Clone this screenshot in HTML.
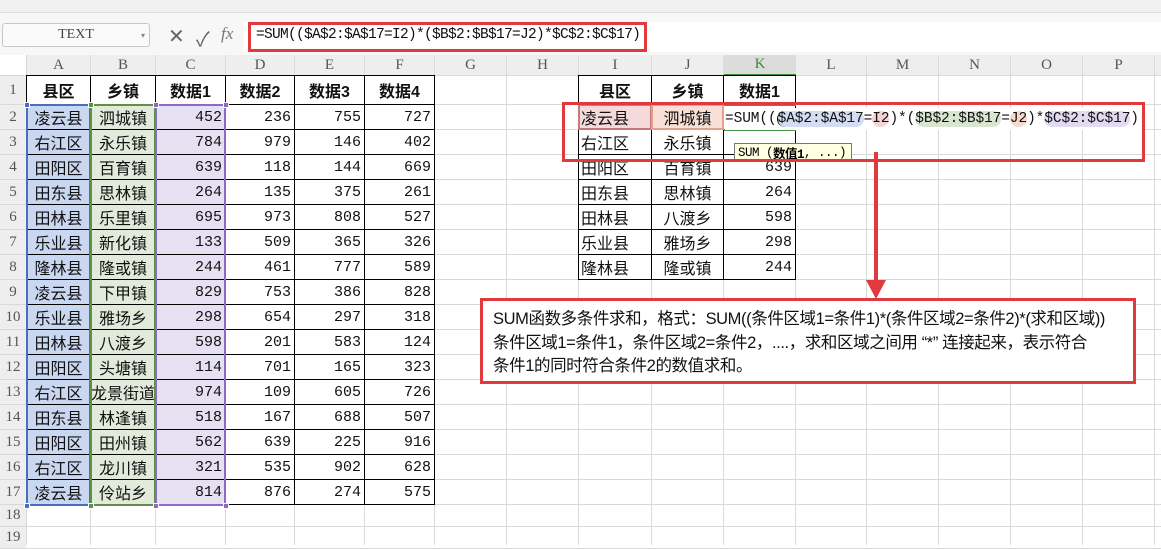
<!DOCTYPE html>
<html><head><meta charset="utf-8">
<style>
*{margin:0;padding:0;box-sizing:border-box}
body{width:1161px;height:545px;overflow:hidden;background:#fff;position:relative;font-family:"Liberation Sans","Noto Sans CJK SC",sans-serif}
.a{position:absolute}
.c{position:absolute;display:flex;align-items:center;white-space:nowrap;overflow:hidden;font-size:16px;color:#111}
.h{position:absolute;display:flex;align-items:center;justify-content:center;background:#eeeeee;color:#555;font-size:15px;font-family:"Liberation Serif","Noto Serif CJK SC",serif}
.num{font-family:"Liberation Mono",monospace;font-size:15px;justify-content:flex-end;padding-right:3px}
</style></head><body>
<div class="a" style="left:0;top:0;width:1161px;height:13px;background:#f1f1f1;border-bottom:1px solid #dcdcdc"></div>
<div class="a" style="left:0;top:13px;width:1161px;height:42px;background:#f7f7f7"></div>
<div class="a" style="left:2px;top:23px;width:148px;height:24px;border:1px solid #c8c8c8;border-radius:3px;background:#fafafa;font-family:'Liberation Serif',serif;font-size:14px;color:#444;display:flex;align-items:center;justify-content:center">TEXT<span style="position:absolute;right:4px;font-size:8px;color:#888">▾</span></div>
<div class="a" style="left:168px;top:24px;font-size:20px;color:#666">✕</div>
<div class="a" style="left:196px;top:23px;font-size:20px;color:#666">✓</div>
<div class="a" style="left:221px;top:24px;font-size:17px;color:#777;font-style:italic;font-family:'Liberation Serif',serif">fx</div>
<div class="a" style="left:244px;top:22px;width:917px;height:30px;background:#fff"></div>
<div class="a" style="left:248px;top:22px;width:399px;height:30px;border:3px solid #e0393e"></div>
<div class="a" style="left:256px;top:27px;font-family:'Liberation Mono',monospace;font-size:14.5px;color:#111;letter-spacing:-0.7px">=SUM(($A$2:$A$17=I2)*($B$2:$B$17=J2)*$C$2:$C$17)</div>
<div id="g"></div>
<script>
var cw=[27,64,65,70,69,70,70,72,72,73,72,72,71,72,72,72,72,10];
var L=['','A','B','C','D','E','F','G','H','I','J','K','L','M','N','O','P',''];
var rh=[21,29,25,25,25,25,25,25,25,25,25,25,25,25,25,25,25,25,22,22];
var x=[0];for(var i=0;i<cw.length;i++)x.push(x[i]+cw[i]);
var y=[55];for(var i=0;i<rh.length;i++)y.push(y[i]+rh[i]);
var h='';
for(var i=1;i<=cw.length;i++)h+='<div class="a" style="left:'+(x[i]-1)+'px;top:55px;width:1px;height:490px;background:#d9d9d9"></div>';
for(var j=1;j<=rh.length;j++)h+='<div class="a" style="left:0;top:'+(y[j]-1)+'px;width:1161px;height:1px;background:#d9d9d9"></div>';
for(var i=1;i<cw.length;i++)h+='<div class="h" style="left:'+x[i]+'px;top:55px;width:'+(cw[i]-1)+'px;height:20px">'+L[i]+'</div>';
for(var j=1;j<rh.length;j++)h+='<div class="h" style="left:0;top:'+y[j]+'px;width:26px;height:'+(rh[j]-1)+'px">'+j+'</div>';
h+='<div class="a" style="left:724px;top:55px;width:72px;height:19px;background:#dcdcdc"></div><div class="h" style="left:724px;top:55px;width:72px;height:19px;background:#dcdcdc;color:#3c8a3c">K</div>';
h+='<div class="a" style="left:724px;top:74px;width:72px;height:2px;background:#3c8a3c"></div>';
var D=[['凌云县','泗城镇',452,236,755,727],['右江区','永乐镇',784,979,146,402],['田阳区','百育镇',639,118,144,669],['田东县','思林镇',264,135,375,261],['田林县','乐里镇',695,973,808,527],['乐业县','新化镇',133,509,365,326],['隆林县','隆或镇',244,461,777,589],['凌云县','下甲镇',829,753,386,828],['乐业县','雅场乡',298,654,297,318],['田林县','八渡乡',598,201,583,124],['田阳区','头塘镇',114,701,165,323],['右江区','龙景街道',974,109,605,726],['田东县','林逢镇',518,167,688,507],['田阳区','田州镇',562,639,225,916],['右江区','龙川镇',321,535,902,628],['凌云县','伶站乡',814,876,274,575]];
function cell(ci,ri,t,cls,st){return '<div class="c '+(cls||'')+'" style="left:'+x[ci]+'px;top:'+y[ri]+'px;width:'+(cw[ci]-1)+'px;height:'+(rh[ri]-1)+'px;'+(st||'')+'">'+t+'</div>';}
var fills=['#cad7f1','#e2ebdb','#e6e0f3'];
for(var r=0;r<16;r++)for(var c=0;c<3;c++)h+='<div class="a" style="left:'+x[c+1]+'px;top:'+y[r+2]+'px;width:'+cw[c+1]+'px;height:'+rh[r+2]+'px;background:'+fills[c]+'"></div>';
var bx1=x[1],bx2=x[7],by1=y[1],by2=y[18];
for(var i=1;i<=7;i++)h+='<div class="a" style="left:'+(x[i]-1)+'px;top:'+by1+'px;width:1px;height:'+(by2-by1)+'px;background:#000"></div>';
for(var j=1;j<=18;j++)h+='<div class="a" style="left:'+(bx1-1)+'px;top:'+(y[j]-1)+'px;width:'+(bx2-bx1+1)+'px;height:1px;background:#000"></div>';
var hd=['县区','乡镇','数据1','数据2','数据3','数据4'];
for(var c=0;c<6;c++)h+=cell(c+1,1,hd[c],'','justify-content:center;font-weight:bold');
for(var r=0;r<16;r++)for(var c=0;c<6;c++){var v=D[r][c];h+=c<2?cell(c+1,r+2,v,'','justify-content:center'):cell(c+1,r+2,v,'num');}
var col=['#4a6fc0','#5f9048','#8b6cc0'];
for(var c=0;c<3;c++){var l=x[c+1],w=cw[c+1];h+='<div class="a" style="left:'+(l-1)+'px;top:'+(y[2]-1)+'px;width:'+(w+1)+'px;height:'+(by2-y[2]+2)+'px;border:2px solid '+col[c]+'"></div>';
[[l-3,y[2]-3],[l+w-3,y[2]-3],[l-3,by2-2],[l+w-3,by2-2]].forEach(function(p){h+='<div class="a" style="left:'+p[0]+'px;top:'+p[1]+'px;width:6px;height:6px;background:'+col[c]+';border:1px solid #fff"></div>'});}
var I2=[['县区','乡镇','数据1'],['凌云县','泗城镇',''],['右江区','永乐镇',''],['田阳区','百育镇',639],['田东县','思林镇',264],['田林县','八渡乡',598],['乐业县','雅场乡',298],['隆林县','隆或镇',244]];
h+='<div class="a" style="left:'+x[9]+'px;top:'+y[2]+'px;width:'+cw[9]+'px;height:25px;background:#f4dada"></div><div class="a" style="left:'+x[10]+'px;top:'+y[2]+'px;width:'+cw[10]+'px;height:25px;background:#f8e0d6"></div>';
for(var i=9;i<=12;i++)h+='<div class="a" style="left:'+(x[i]-1)+'px;top:'+y[1]+'px;width:1px;height:'+(y[9]-y[1])+'px;background:#000"></div>';
for(var j=1;j<=9;j++)h+='<div class="a" style="left:'+(x[9]-1)+'px;top:'+(y[j]-1)+'px;width:'+(x[12]-x[9]+1)+'px;height:1px;background:#000"></div>';
for(var r=0;r<8;r++){h+=cell(9,r+1,I2[r][0],'',r==0?'justify-content:center;font-weight:bold':'padding-left:2px');h+=cell(10,r+1,I2[r][1],'','justify-content:center'+(r==0?';font-weight:bold':''));h+=r==0?cell(11,1,'数据1','','justify-content:center;font-weight:bold'):cell(11,r+1,I2[r][2],'num');}
h+='<div class="a" style="left:'+(x[9]-1)+'px;top:'+(y[2]-1)+'px;width:'+(cw[9]+1)+'px;height:26px;border:2px solid #c8787a"></div>';
h+='<div class="a" style="left:'+(x[10]-1)+'px;top:'+(y[2]-1)+'px;width:'+(cw[10]+1)+'px;height:26px;border:2px solid #e2a08e"></div>';
h+='<div class="a" style="left:724px;top:'+(y[2]-1)+'px;width:72px;height:2px;background:#4a9a4a"></div><div class="a" style="left:724px;top:'+(y[3]-1)+'px;width:72px;height:2px;background:#4a9a4a"></div>';
document.getElementById('g').innerHTML=h;
</script>
<div class="a" style="left:725px;top:108px;height:22px;background:#fff;padding-right:3px;font-family:'Liberation Mono',monospace;font-size:14.5px;letter-spacing:-0.1px;color:#111;white-space:nowrap;display:flex;align-items:center">=SUM((<span style="background:#d3dcf3;border-radius:8px;border-left:1px solid #000">$A$2:$A$17</span>=<span style="background:#f3d3d3;border-radius:8px">I2</span>)*(<span style="background:#d8e6d1;border-radius:8px">$B$2:$B$17</span>=<span style="background:#f6dacd;border-radius:8px">J2</span>)*<span style="background:#e1daf1;border-radius:8px">$C$2:$C$17</span>)</div>
<div class="a" style="left:734px;top:143px;width:118px;height:19px;background:#ffffe1;border:1px solid #777;font-family:'Liberation Mono','Noto Sans CJK SC',monospace;font-size:12.5px;display:flex;align-items:center;padding-left:3px;letter-spacing:-0.5px">SUM (<b>数值1</b>, ...)</div>
<div class="a" style="left:562px;top:102px;width:583px;height:60px;border:3px solid #e0393e"></div>
<div class="a" style="left:874px;top:152px;width:4px;height:132px;background:#e0393e"></div>
<svg class="a" style="left:866px;top:280px" width="20" height="19"><polygon points="0,0 20,0 10,19" fill="#e0393e"/></svg>
<div class="a" style="left:480px;top:298px;width:656px;height:86px;border:3px solid #e0393e;background:#fff;padding:7px 0 0 10px;font-family:'Liberation Sans','Noto Sans CJK SC',sans-serif;font-size:16.5px;line-height:23.5px;color:#111;letter-spacing:-0.4px;white-space:nowrap">SUM函数多条件求和，格式：SUM((条件区域1=条件1)*(条件区域2=条件2)*(求和区域))<br>条件区域1=条件1，条件区域2=条件2，....，求和区域之间用 “*” 连接起来，表示符合<br>条件1的同时符合条件2的数值求和。</div>
</body></html>
